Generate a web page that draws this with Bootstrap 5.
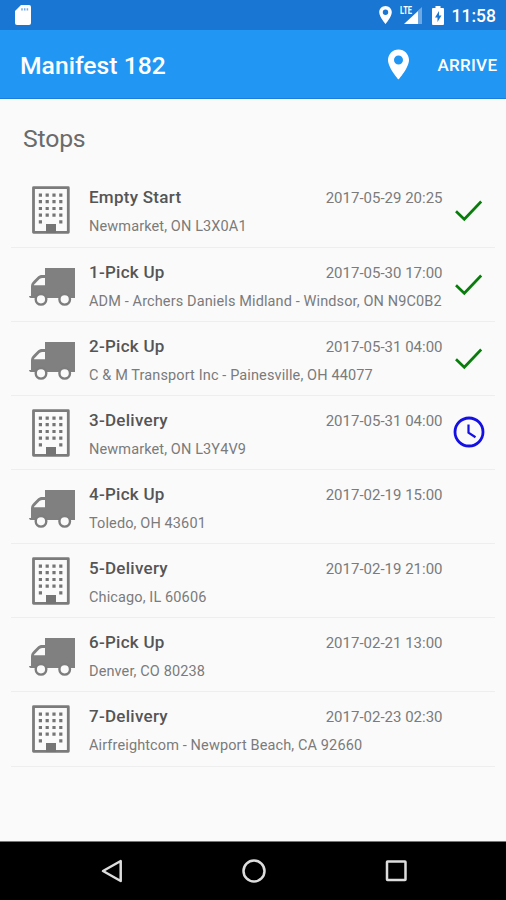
<!DOCTYPE html>
<html lang="en">
<head>
<meta charset="utf-8">
<meta name="viewport" content="width=device-width, initial-scale=1">
<title>Manifest 182</title>
<link href="https://cdn.jsdelivr.net/npm/bootstrap@5.3.0/dist/css/bootstrap.min.css" rel="stylesheet">
<style>
  body { font-family: Roboto, "Noto Sans", sans-serif; background: #fafafa; color: #606060; height: 900px; overflow: hidden; }
  svg { display: block; flex: none; }
  .status-bar { height: 30px; background: #1976d2; padding: 0 10px 0 15px; }
  .battery { margin-left: 10px; }
  .clock-text { font-size: 17.5px; font-weight: 500; line-height: 30px; margin-left: 8px; padding-top: 2px; }
  .app-bar { height: 69px; background: #2196f3; border-bottom: 1px solid #1a7fdc; padding: 0 9px 0 20px; }
  .app-title { font-size: 24.7px; font-weight: 500; line-height: 32px; padding-top: 3px; }
  .arrive { font-size: 17px; font-weight: 500; margin-left: 28px; padding-top: 3px; letter-spacing: .3px; margin-right: -.3px; }
  .section-title { font-size: 24.8px; line-height: 30px; padding: 25px 23px 0; height: 74.4px; color: #6b6b6b; letter-spacing: -.2px; }
  .stops { margin: 0 11px; }
  .stop { height: 74.15px; border-bottom: 1px solid #eeeeee; }
  .stop-icon { width: 78px; padding-left: 17px; }
  .building { margin: 13px 0 0 3.5px; }
  .truck { margin: 20px 0 0 1px; }
  .stop-name { font-size: 17px; font-weight: 500; line-height: 22px; color: #555; letter-spacing: .27px; }
  .stop-time { font-size: 15px; line-height: 22px; color: #7b7b7b; padding-top: 1px; letter-spacing: 0; }
  .stop-place { font-size: 14.5px; line-height: 20px; color: #7b7b7b; margin-top: 8px; letter-spacing: .12px; }
  .stop-text { width: 353.500px; padding-top: 13px; }
  .stop-state { padding-left: 10px; padding-top: 20.600px; }
  .nav-keys { height: 59px; background: #000; border-top: 1px solid #777; }
</style>
</head>
<body class="d-flex flex-column">
<svg width="0" height="0" class="position-absolute" aria-hidden="true">
  <symbol id="building" viewBox="0 0 38 48">
    <path fill="none" stroke="#7b7b7b" stroke-width="2.800" stroke-linejoin="round" d="M1.500 1.700h34.800v44.600H1.500z"/>
    <path fill="none" stroke="#757575" stroke-width="3.200" stroke-dasharray="3.200 3.600" d="M6.800 9.100h25M6.800 15.700h25M6.800 22.500h25M6.800 29.200h25"/>
    <path fill="#757575" d="M6.800 34.300H10v3.200H6.800zM27.200 34.300h3.200v3.200h-3.200zM14 38h10v9H14z"/>
  </symbol>
  <symbol id="truck" viewBox="0 0 46 38">
    <path fill="#808080" d="M16 0h30v30H2c-1.700 0-2-2-2-2h2V18.500C2 16 3 14.500 5 12.500L8.500 9C10 7.500 11.500 7 13 7h3z"/>
    <path fill="#fafafa" d="M5 17.300v-.5L10.500 11c1-.8 2-1 3-1H16v7.300z"/>
    <circle cx="12" cy="31.300" r="5.300" fill="#fafafa" stroke="#7d7d7d" stroke-width="2.400"/>
    <circle cx="35.700" cy="31.300" r="5.300" fill="#fafafa" stroke="#7d7d7d" stroke-width="2.400"/>
  </symbol>
  <symbol id="check" viewBox="0 0 32 32"><path fill="none" stroke="#087d0c" stroke-width="2.700" d="M3 17.300l8.300 8L28.200 7.500"/></symbol>
  <symbol id="pending" viewBox="0 0 32 32"><circle cx="16" cy="16" r="14" fill="none" stroke="#1410e4" stroke-width="2.800"/><path fill="none" stroke="#1410e4" stroke-width="2.200" d="M15.500 8.500v8.200l7 4.500"/></symbol>
  <symbol id="pin" viewBox="5 2 14 20"><path fill="#fff" fill-rule="evenodd" d="M12 2C8.130 2 5 5.130 5 9c0 5.250 7 13 7 13s7-7.750 7-13c0-3.870-3.130-7-7-7zm0 10a3 3 0 1 1 0-6 3 3 0 0 1 0 6z"/></symbol>
</svg>

<div class="status-bar d-flex align-items-center text-white flex-shrink-0">
  <svg class="me-auto" width="16" height="20" viewBox="0 0 16 20"><path fill="#fff" d="M6 0h8q2 0 2 2v16q0 2-2 2H2q-2 0-2-2V6z"/><path stroke="#1976d2" stroke-width="1.500" d="M7 3.200v2.400M9.700 3.200v2.400M12.400 3.200v2.400" opacity=".6"/></svg>
  <svg width="13" height="18"><use href="#pin"/></svg>
  <svg width="22" height="20" viewBox="0 0 22 20" class="ms-2"><path fill="#70a8e2" d="M22 2v17h-4V5.500z"/><path fill="#fff" d="M18 6v13H4z"/><text x="0" y="9" fill="#fff" font-size="10" font-weight="700" textLength="12" lengthAdjust="spacingAndGlyphs">LTE</text></svg>
  <svg class="battery" width="12" height="19" viewBox="0 0 12 19"><path fill="#fff" d="M3.500 0h5v2H11q1 0 1 1v15q0 1-1 1H1q-1 0-1-1V3q0-1 1-1h2.500z"/><path fill="#1976d2" d="M7 5L3 11.500h2.500V16L9.500 9.500H7z"/></svg>
  <span class="clock-text">11:58</span>
</div>

<header class="app-bar d-flex align-items-center text-white flex-shrink-0">
  <h1 class="app-title mb-0 me-auto">Manifest 182</h1>
  <svg width="21" height="31"><use href="#pin"/></svg>
  <span class="arrive">ARRIVE</span>
</header>

<main class="flex-grow-1">
  <h2 class="section-title mb-0 fw-normal">Stops</h2>
  <div class="stops" id="stops"></div>
</main>

<footer class="nav-keys flex-shrink-0 d-flex justify-content-center align-items-center">
  <svg width="310" height="28" viewBox="0 0 310 28" fill="none" stroke="#ddd" stroke-width="2.500"><path stroke-linejoin="round" d="M22.700 4v20L5 14z"/><circle cx="156" cy="14" r="10.500"/><rect x="289" y="4.500" width="18.500" height="18.500" rx=".5"/></svg>
</footer>

<script src="https://cdn.jsdelivr.net/npm/bootstrap@5.3.0/dist/js/bootstrap.bundle.min.js"></script>
<script>
  const stops = [
    ["building", "Empty Start", "2017-05-29 20:25", "Newmarket, ON L3X0A1", "check"],
    ["truck", "1-Pick Up", "2017-05-30 17:00", "ADM - Archers Daniels Midland - Windsor, ON N9C0B2", "check"],
    ["truck", "2-Pick Up", "2017-05-31 04:00", "C & M Transport Inc - Painesville, OH 44077", "check"],
    ["building", "3-Delivery", "2017-05-31 04:00", "Newmarket, ON L3Y4V9", "pending"],
    ["truck", "4-Pick Up", "2017-02-19 15:00", "Toledo, OH 43601", ""],
    ["building", "5-Delivery", "2017-02-19 21:00", "Chicago, IL 60606", ""],
    ["truck", "6-Pick Up", "2017-02-21 13:00", "Denver, CO 80238", ""],
    ["building", "7-Delivery", "2017-02-23 02:30", "Airfreightcom - Newport Beach, CA 92660", ""]
  ];
  const icons = {
    building: '<svg class="building" width="38" height="48"><use href="#building"/></svg>',
    truck: '<svg class="truck" width="46" height="38"><use href="#truck"/></svg>'
  };
  document.getElementById("stops").innerHTML = stops.map(([icon, name, time, place, state]) => `
    <div class="stop d-flex">
      <div class="stop-icon flex-shrink-0">${icons[icon]}</div>
      <div class="stop-text flex-shrink-0">
        <div class="d-flex justify-content-between"><span class="stop-name">${name}</span><span class="stop-time">${time}</span></div>
        <div class="stop-place text-nowrap">${place.replace("&", "&amp;")}</div>
      </div>
      <div class="stop-state">${state ? `<svg width="32" height="32"><use href="#${state}"/></svg>` : ""}</div>
    </div>`).join("");
</script>
</body>
</html>
